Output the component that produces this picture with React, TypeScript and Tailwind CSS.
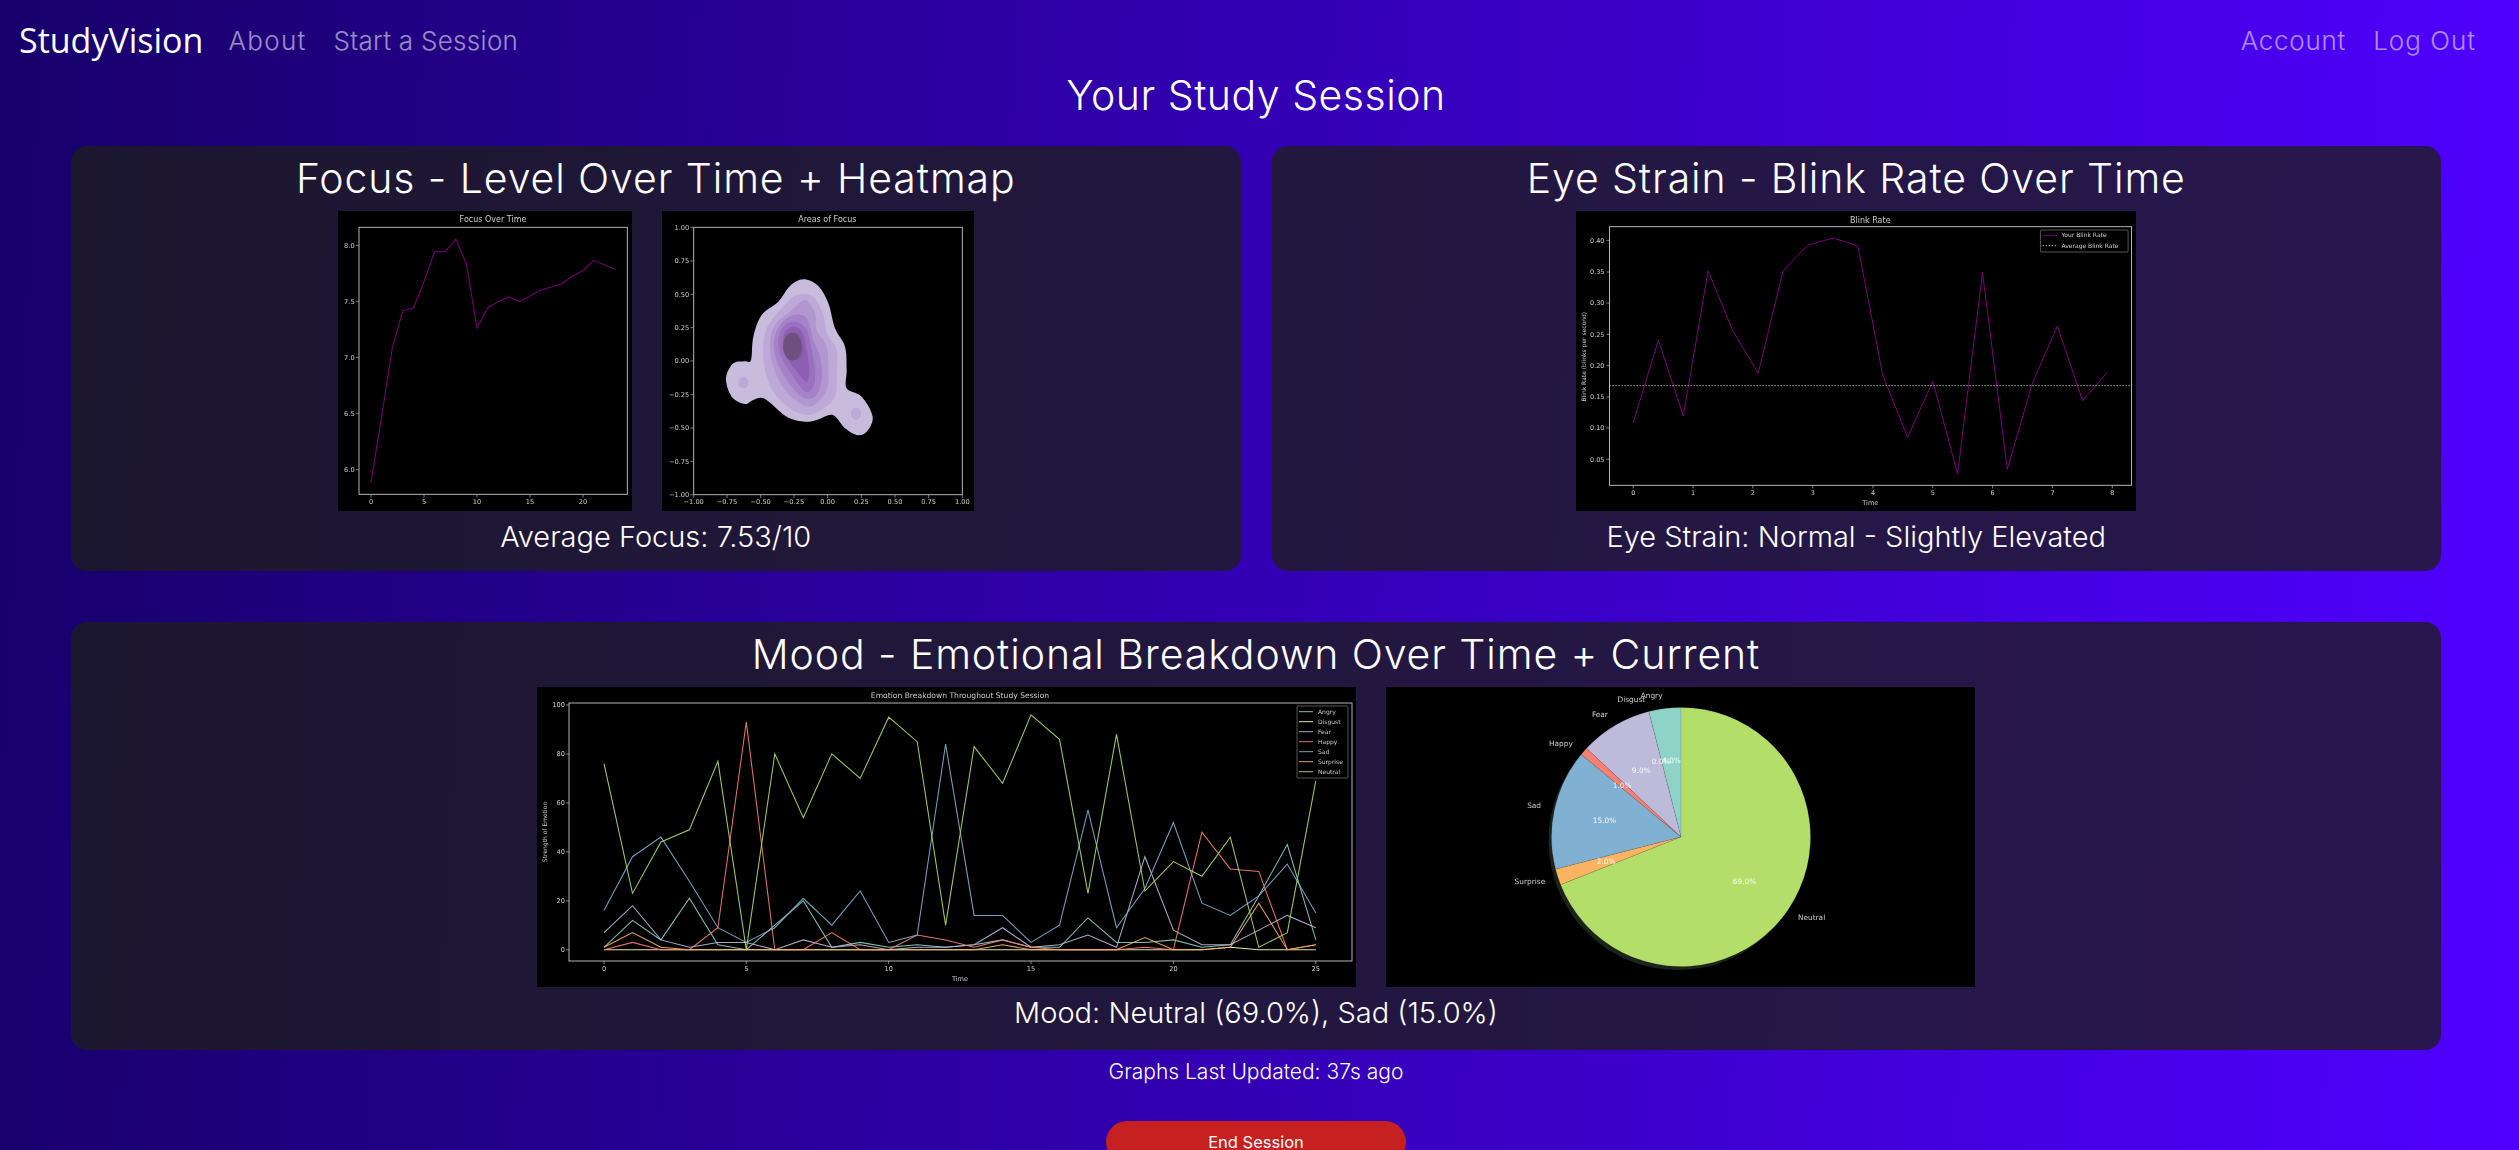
import React from "react";

const MPL = "'DejaVu Sans', sans-serif";
const AX = "#b4b4b4";
const TXT = "#cccccc";

const poly = (pts: number[][]) => pts.map((p) => p.map((n) => n.toFixed(1)).join(",")).join(" ");

function smooth(p: number[][]) {
  const n = p.length;
  let d = `M${p[0][0]},${p[0][1]}`;
  for (let i = 0; i < n; i++) {
    const a = p[(i - 1 + n) % n], b = p[i], c = p[(i + 1) % n], e = p[(i + 2) % n];
    d += ` C${b[0] + (c[0] - a[0]) / 6},${b[1] + (c[1] - a[1]) / 6} ${c[0] - (e[0] - b[0]) / 6},${c[1] - (e[1] - b[1]) / 6} ${c[0]},${c[1]}`;
  }
  return d + "Z";
}

function FocusChart() {
  const ys = [847, 650, 445, 332, 324, 245, 155, 155, 117, 192, 384, 323, 305, 291, 304, 288, 271, 261, 252, 228, 212, 181, 194, 208];
  const pts = ys.map((y, i) => [153 + i * 31.8, y]);
  return (
    <svg viewBox="54 33 882 900" className="w-[294px] h-[300px] bg-black blur-[0.35px] shrink-0" fontFamily={MPL} fill={TXT} fontSize="20">
      <text x="519" y="67" textAnchor="middle" fontSize="24">Focus Over Time</text>
      <rect x="117" y="82" width="805" height="801" fill="none" stroke={AX} strokeWidth="3" />
      <polyline points={poly(pts)} fill="none" stroke="#6c006c" strokeWidth="3.5" />
      {[["8.0", 136], ["7.5", 304], ["7.0", 472], ["6.5", 640], ["6.0", 809]].map(([t, y]) => (
        <g key={t}>
          <line x1="107" x2="117" y1={y} y2={y} stroke={AX} strokeWidth="2" />
          <text x="104" y={Number(y) + 7} textAnchor="end">{t}</text>
        </g>
      ))}
      {[["0", 153], ["5", 312], ["10", 471], ["15", 630], ["20", 789]].map(([t, x]) => (
        <g key={t}>
          <line y1="883" y2="893" x1={x} x2={x} stroke={AX} strokeWidth="2" />
          <text x={x} y="913" textAnchor="middle">{t}</text>
        </g>
      ))}
    </svg>
  );
}

function HeatChart() {
  const levels: [string, number[][]][] = [
    ["#c9bbdc", [[303, 480], [310, 410], [335, 345], [385, 305], [420, 258], [460, 238], [505, 258], [535, 310], [555, 385], [585, 440], [590, 510], [590, 565], [635, 590], [668, 650], [650, 695], [620, 705], [585, 685], [548, 645], [500, 660], [465, 665], [410, 650], [345, 597], [310, 600], [285, 612], [245, 590], [228, 535], [250, 490], [285, 484]]],
    ["#bda8d8", [[340, 435], [355, 375], [400, 320], [440, 285], [490, 290], [520, 345], [530, 400], [560, 450], [560, 520], [555, 590], [510, 632], [470, 645], [420, 625], [370, 575], [345, 510]]],
    ["#b196d0", [[360, 430], [375, 375], [420, 335], [465, 300], [495, 340], [500, 390], [530, 440], [535, 510], [530, 570], [490, 617], [450, 610], [400, 565], [370, 500]]],
    ["#a583c8", [[372, 425], [390, 375], [430, 345], [470, 355], [490, 420], [510, 470], [515, 540], [495, 590], [455, 590], [410, 540], [380, 480]]],
    ["#9a70bf", [[385, 420], [405, 375], [440, 365], [470, 390], [485, 450], [495, 510], [490, 560], [465, 575], [430, 530], [395, 475]]],
    ["#8d5fb3", [[400, 410], [425, 380], [455, 395], [470, 450], [478, 510], [470, 545], [445, 520], [410, 470]]],
    ["#7f5aa0", [[405, 415], [430, 398], [450, 410], [460, 460], [440, 480], [412, 460]]],
  ];
  const yt: [string, number][] = [["1.00", 82], ["0.75", 183], ["0.50", 283], ["0.25", 383], ["0.00", 483], ["−0.25", 584], ["−0.50", 684], ["−0.75", 784], ["−1.00", 884]];
  const xt: [string, number][] = [["−1.00", 131], ["−0.75", 231], ["−0.50", 332], ["−0.25", 432], ["0.00", 533], ["0.25", 634], ["0.50", 735], ["0.75", 836], ["1.00", 937]];
  return (
    <svg viewBox="36 33 936 900" className="w-[312px] h-[300px] bg-black blur-[0.35px] shrink-0" fontFamily={MPL} fill={TXT} fontSize="20">
      <text x="532" y="67" textAnchor="middle" fontSize="24">Areas of Focus</text>
      {levels.map(([c, p]) => <path key={c} d={smooth(p)} fill={c} />)}
      <ellipse cx="280" cy="548" rx="15" ry="17" fill="#bda8d8" />
      <ellipse cx="618" cy="641" rx="15" ry="18" fill="#bda8d8" />
      <ellipse cx="427" cy="440" rx="28" ry="42" fill="#6e4f7d" />
      <rect x="131" y="82" width="806" height="802" fill="none" stroke={AX} strokeWidth="3" />
      {yt.map(([t, y]) => (
        <g key={t}>
          <line x1="121" x2="131" y1={y} y2={y} stroke={AX} strokeWidth="2" />
          <text x="118" y={y + 7} textAnchor="end">{t}</text>
        </g>
      ))}
      {xt.map(([t, x]) => (
        <g key={t}>
          <line y1="884" y2="894" x1={x} x2={x} stroke={AX} strokeWidth="2" />
          <text x={x} y="912" textAnchor="middle">{t}</text>
        </g>
      ))}
    </svg>
  );
}

function BlinkChart() {
  const X = (x: number) => (x - 43) / 2.657;
  const Y = (y: number) => (y - 33) / 3;
  const xs = [195, 262, 328, 394, 460, 527, 593, 659, 726, 792, 858, 924, 991, 1057, 1123, 1189, 1256, 1322, 1389, 1455];
  const ys = [668, 420, 648, 212, 393, 520, 213, 135, 114, 138, 525, 712, 544, 822, 218, 808, 548, 378, 602, 517];
  return (
    <svg viewBox="0 0 560 300" className="w-[560px] h-[300px] bg-black blur-[0.35px] shrink-0" fontFamily={MPL} fill={TXT} fontSize="6.5">
      <text x={X(825)} y="11.5" textAnchor="middle" fontSize="8">Blink Rate</text>
      <rect x={X(132)} y={Y(80)} width={X(1519) - X(132)} height={Y(856) - Y(80)} fill="none" stroke={AX} />
      <polyline points={poly(xs.map((x, i) => [X(x), Y(ys[i])]))} fill="none" stroke="#7a007a" strokeWidth="1" />
      <line x1={X(132)} x2={X(1519)} y1={Y(557)} y2={Y(557)} stroke="#e0e0e0" strokeWidth="0.9" strokeDasharray="1.2 1.8" />
      {[["0.40", 121], ["0.35", 216], ["0.30", 309], ["0.25", 403], ["0.20", 497], ["0.15", 591], ["0.10", 684], ["0.05", 778]].map(([t, y]) => (
        <g key={t}>
          <line x1={X(132) - 3} x2={X(132)} y1={Y(Number(y))} y2={Y(Number(y))} stroke={AX} strokeWidth="0.7" />
          <text x={X(132) - 5} y={Y(Number(y)) + 2.3} textAnchor="end">{t}</text>
        </g>
      ))}
      {[195, 354, 513, 672, 832, 991, 1150, 1309, 1468].map((x, i) => (
        <g key={x}>
          <line y1={Y(856)} y2={Y(856) + 3} x1={X(x)} x2={X(x)} stroke={AX} strokeWidth="0.7" />
          <text x={X(x)} y={Y(856) + 10} textAnchor="middle">{i}</text>
        </g>
      ))}
      <text x={X(825)} y={Y(908) + 2.3} textAnchor="middle">Time</text>
      <text transform={`translate(${X(63) + 2.3},${Y(470)}) rotate(-90)`} textAnchor="middle" fontSize="6">Blink Rate (blinks per second)</text>
      <rect x={X(1277)} y={Y(90)} width={X(1510) - X(1277)} height={Y(156) - Y(90)} rx="1" fill="#000" stroke="#777" strokeWidth="0.7" />
      <line x1={X(1283)} x2={X(1321)} y1={Y(106)} y2={Y(106)} stroke="#7a007a" />
      <line x1={X(1283)} x2={X(1321)} y1={Y(137)} y2={Y(137)} stroke="#e0e0e0" strokeWidth="0.9" strokeDasharray="1.2 1.8" />
      <text x={X(1333)} y={Y(106) + 2} fontSize="6">Your Blink Rate</text>
      <text x={X(1333)} y={Y(137) + 2} fontSize="6">Average Blink Rate</text>
    </svg>
  );
}

const SERIES: { n: string; c: string; v: number[] }[] = [
  { n: "Angry", c: "#8dd3c7", v: [1, 12, 4, 21, 2, 0, 10, 20, 1, 3, 1, 2, 1, 2, 4, 1, 1, 13, 3, 3, 4, 1, 2, 22, 43, 4] },
  { n: "Disgust", c: "#ffffb3", v: [0, 0, 0, 0, 0, 0, 0, 0, 0, 0, 0, 0, 0, 0, 0, 0, 0, 0, 0, 0, 0, 0, 1, 0, 0, 0] },
  { n: "Fear", c: "#bebada", v: [7, 18, 4, 1, 3, 3, 0, 4, 1, 2, 0, 1, 1, 2, 9, 1, 2, 6, 1, 38, 8, 2, 2, 8, 14, 9] },
  { n: "Happy", c: "#fb8072", v: [0, 3, 0, 0, 9, 93, 0, 0, 7, 0, 0, 6, 4, 1, 4, 1, 0, 0, 0, 1, 0, 48, 33, 32, 0, 2] },
  { n: "Sad", c: "#80b1d3", v: [16, 38, 46, 28, 9, 3, 9, 21, 10, 24, 3, 6, 84, 14, 14, 3, 10, 57, 9, 25, 52, 19, 14, 22, 35, 15] },
  { n: "Surprise", c: "#fdb462", v: [1, 7, 1, 0, 0, 0, 0, 0, 0, 0, 0, 0, 0, 0, 2, 0, 0, 0, 0, 5, 0, 0, 1, 19, 0, 2] },
  { n: "Neutral", c: "#b3de69", v: [76, 23, 44, 49, 77, 0, 80, 54, 80, 70, 95, 85, 10, 83, 68, 96, 86, 23, 88, 24, 36, 30, 46, 1, 7, 69] },
];

function EmotionChart() {
  const X = (t: number) => 67 + 28.47 * t;
  const Y = (v: number) => 262.7 - 2.447 * v;
  return (
    <svg viewBox="0 0 819 300" className="w-[819px] h-[300px] bg-black blur-[0.3px] shrink-0" fontFamily={MPL} fill={TXT} fontSize="6.6">
      <text x="423" y="11" textAnchor="middle" fontSize="7.6">Emotion Breakdown Throughout Study Session</text>
      {SERIES.map((s) => (
        <polyline key={s.n} points={poly(s.v.map((v, i) => [X(i), Y(v)]))} fill="none" stroke={s.c} strokeOpacity="0.9" strokeWidth="1.05" />
      ))}
      <rect x="32" y="16" width="783" height="258" fill="none" stroke={AX} />
      {[0, 20, 40, 60, 80, 100].map((v) => (
        <g key={v}>
          <line x1="29" x2="32" y1={Y(v)} y2={Y(v)} stroke={AX} strokeWidth="0.7" />
          <text x="28" y={Y(v) + 2.3} textAnchor="end">{v}</text>
        </g>
      ))}
      {[0, 5, 10, 15, 20, 25].map((t) => (
        <g key={t}>
          <line y1="274" y2="277" x1={X(t)} x2={X(t)} stroke={AX} strokeWidth="0.7" />
          <text x={X(t)} y="284" textAnchor="middle">{t}</text>
        </g>
      ))}
      <text x="423" y="294" textAnchor="middle">Time</text>
      <text transform="translate(9.5,145) rotate(-90)" textAnchor="middle" fontSize="6">Strength of Emotion</text>
      <rect x="760" y="19" width="51" height="72" rx="1" fill="#000" stroke="#777" strokeWidth="0.7" />
      {SERIES.map((s, i) => (
        <g key={s.n}>
          <line x1="762" x2="776" y1={24.7 + i * 10} y2={24.7 + i * 10} stroke={s.c} strokeOpacity="0.9" strokeWidth="1" />
          <text x="781" y={26.7 + i * 10} fontSize="6">{s.n}</text>
        </g>
      ))}
    </svg>
  );
}

function PieChart() {
  const cx = 295, cy = 150, r = 129.5;
  const P = (x: number, y: number) => [(x - 16) / 2.613, (y - 24) / 3];
  const slices: [number, string][] = [[4, "#8dd3c7"], [9, "#bebada"], [1, "#fb8072"], [15, "#80b1d3"], [2, "#fdb462"], [69, "#b3de69"]];
  let acc = 0;
  const arcs = slices.map(([pct, c]) => {
    const a0 = (90 + acc * 3.6) * (Math.PI / 180);
    acc += pct;
    const a1 = (90 + acc * 3.6) * (Math.PI / 180);
    const d = `M${cx},${cy} L${cx + r * Math.cos(a0)},${cy - r * Math.sin(a0)} A${r},${r} 0 ${pct > 50 ? 1 : 0} 0 ${cx + r * Math.cos(a1)},${cy - r * Math.sin(a1)}Z`;
    return <path key={c} d={d} fill={c} stroke="#00000033" strokeWidth="0.4" />;
  });
  const labels: [string, number, number][] = [["Angry", 710, 50], ["Disgust", 657, 60], ["Fear", 575, 105], ["Happy", 473, 192], ["Sad", 403, 380], ["Surprise", 392, 606], ["Neutral", 1128, 714]];
  const pcts: [string, number, number][] = [["4.0%", 762, 243], ["0.0%", 735, 248], ["9.0%", 683, 273], ["1.0%", 633, 319], ["15.0%", 587, 423], ["2.0%", 591, 547], ["69.0%", 953, 606]];
  return (
    <svg viewBox="0 0 589 300" className="w-[589px] h-[300px] bg-black blur-[0.3px] shrink-0" fontFamily={MPL} fontSize="7.4">
      <circle cx={cx - 3} cy={cy + 3.5} r={r} fill="#1c231c" />
      {arcs}
      {labels.map(([t, x, y]) => {
        const [a, b] = P(x, y);
        return <text key={t} x={a} y={b + 2.6} textAnchor="middle" fill={TXT}>{t}</text>;
      })}
      {pcts.map(([t, x, y]) => {
        const [a, b] = P(x, y);
        return <text key={t} x={a} y={b + 2.6} textAnchor="middle" fill="#ffffff" fillOpacity="0.9">{t}</text>;
      })}
    </svg>
  );
}

function Panel({ title, caption, children, className = "" }: { title: string; caption: string; children: React.ReactNode; className?: string }) {
  return (
    <section className={`bg-[#1e1e1e]/[0.78] rounded-2xl flex flex-col items-center ${className}`}>
      <h2 className="h-[65px] flex items-center text-[41px] tracking-[0.9px] font-light text-white whitespace-nowrap">{title}</h2>
      <div className="flex justify-center gap-[30px] h-[300px]">{children}</div>
      <p className="h-[52px] flex items-center text-[29px] font-light text-white whitespace-nowrap">{caption}</p>
    </section>
  );
}

export default function App() {
  return (
    <div className="h-screen overflow-hidden bg-[linear-gradient(93deg,#17006a,#5000ff)] font-['Inter','Liberation_Sans',sans-serif]">
      <nav className="h-[60px] pl-[19px] pr-[43px] flex items-center justify-between pt-[20px]">
        <div className="flex items-center">
          <span className="font-['Open_Sans',sans-serif] text-[34px] text-white mr-[25px]">StudyVision</span>
          <a className="text-[26px] tracking-[1.3px] font-light text-white/55 mr-[27px]">About</a>
          <a className="text-[26px] tracking-[0.3px] font-light text-white/55">Start a Session</a>
        </div>
        <div className="flex items-center gap-[27px]">
          <a className="text-[26px] tracking-[0.75px] font-light text-white/55">Account</a>
          <a className="text-[26px] tracking-[1px] font-light text-white/55">Log Out</a>
        </div>
      </nav>
      <main className="pl-[71px] pr-[78px] flex flex-col items-stretch">
        <h1 className="h-[86px] pb-[14px] flex items-center justify-center text-[41px] tracking-[0.5px] font-light text-white">Your Study Session</h1>
        <div className="grid grid-cols-2 gap-[31px]">
          <Panel className="h-[425px]" title="Focus - Level Over Time + Heatmap" caption="Average Focus: 7.53/10">
            <FocusChart />
            <HeatChart />
          </Panel>
          <Panel className="h-[425px]" title="Eye Strain - Blink Rate Over Time" caption="Eye Strain: Normal - Slightly Elevated">
            <BlinkChart />
          </Panel>
        </div>
        <Panel className="h-[428px] mt-[51px]" title="Mood - Emotional Breakdown Over Time + Current" caption="Mood: Neutral (69.0%), Sad (15.0%)">
          <EmotionChart />
          <PieChart />
        </Panel>
        <p className="h-[44px] flex items-center justify-center text-[21px] font-light text-white">Graphs Last Updated: 37s ago</p>
        <div className="flex justify-center mt-[27px]">
          <button className="w-[300px] h-[42px] rounded-[21px] bg-[#c62020] text-white text-[16.5px] font-normal">End Session</button>
        </div>
      </main>
    </div>
  );
}
